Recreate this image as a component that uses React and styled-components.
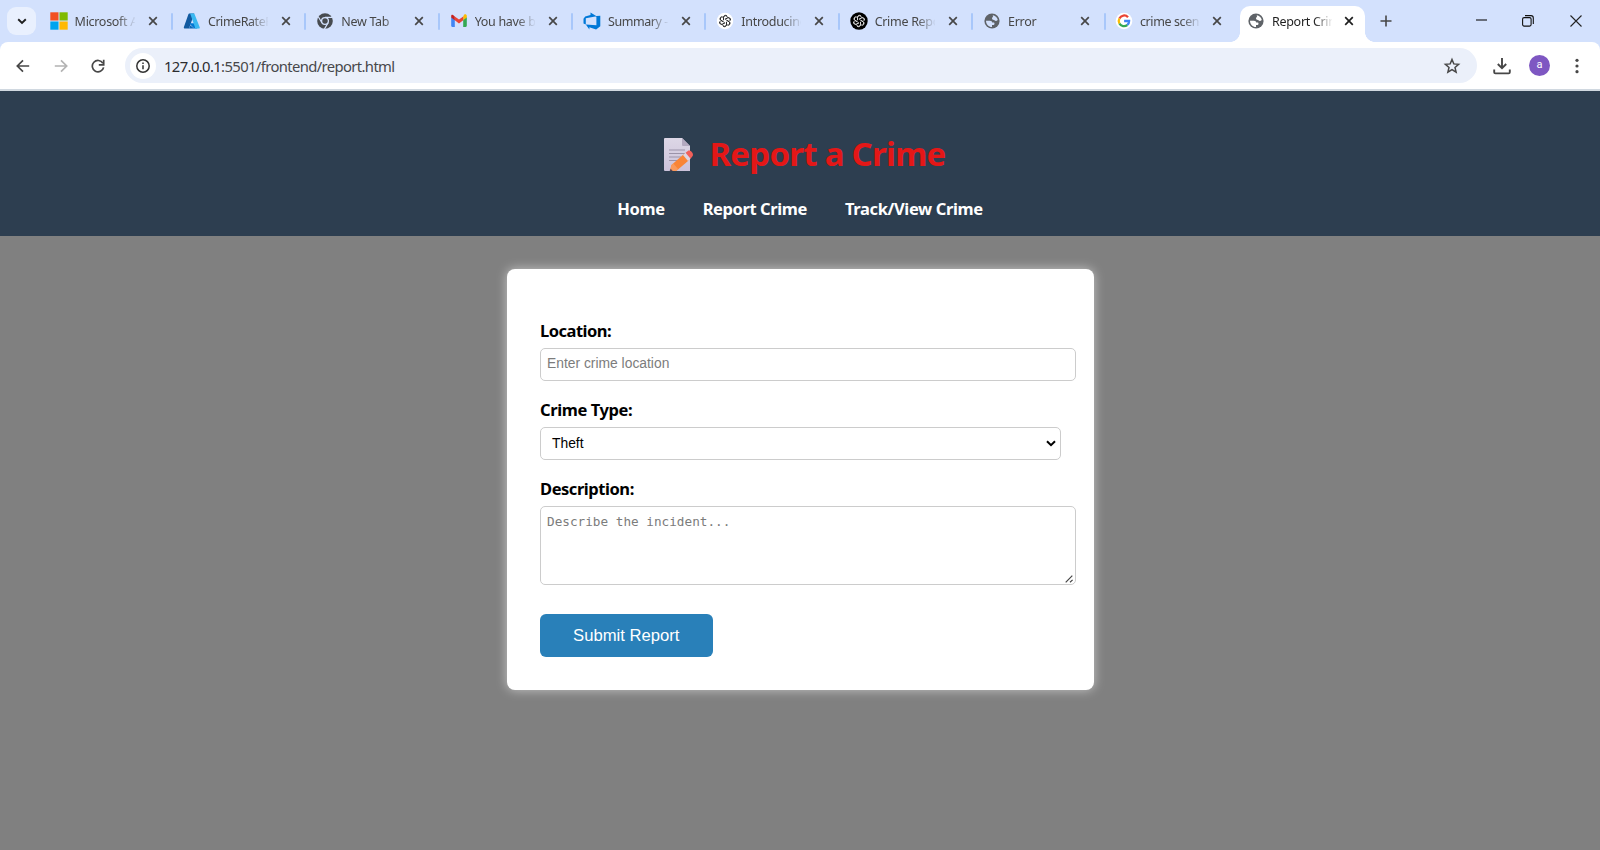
import React from "react";
import styled, { createGlobalStyle } from "styled-components";

const Global = createGlobalStyle`
  *, *::before, *::after { box-sizing: border-box; }
  body { margin: 0; background: #808080; font-family: "Noto Sans", "Open Sans", sans-serif; }
  svg { display: block; flex: none; }
`;

const Window = styled.div`
  width: 1600px;
  height: 850px;
  overflow: hidden;
  display: flex;
  flex-direction: column;
  background: #808080;
`;

/* Browser chrome */
const TabStrip = styled.div`
  height: 42px;
  flex: none;
  display: flex;
  align-items: flex-start;
  background: #d3e1fd;
  padding-left: 7px;
`;
const TabSearch = styled.div`
  width: 29px;
  height: 28px;
  margin: 7px 13.6px 0 0;
  border-radius: 9px;
  background: #e9f0fe;
  display: grid;
  place-items: center;
`;
const Tab = styled.div`
  position: relative;
  width: ${(p) => p.$w || 133.35}px;
  height: ${(p) => (p.$active ? 36 : 42)}px;
  margin-top: ${(p) => (p.$active ? 6 : 0)}px;
  padding: ${(p) => (p.$active ? "0 0 6px 7px" : "0")};
  display: flex;
  align-items: center;
  flex: none;
  background: ${(p) => (p.$active ? "#fff" : "transparent")};
  border-radius: 10px 10px 0 0;
  color: ${(p) => (p.$active ? "#1f1f1f" : "#474747")};
`;
const TabFoot = styled.span`
  position: absolute;
  bottom: 0;
  ${(p) => p.$side}: -10px;
  width: 10px;
  height: 10px;
  background: radial-gradient(circle at ${(p) => (p.$side === "left" ? "0 0" : "100% 0")}, transparent 9.6px, #fff 10.2px);
`;
const Label = styled.span`
  width: 60px;
  margin: 1px 0 0 7px;
  overflow: hidden;
  white-space: nowrap;
  font-size: 12.5px;
  line-height: 18px;
  letter-spacing: ${(p) => p.$ls}px;
  mask-image: linear-gradient(to right, #000 42px, transparent 61px);
`;
const CloseSlot = styled.span`
  margin-left: ${(p) => p.$gap || 13}px;
`;
const Separator = styled.span`
  width: 2px;
  height: 17px;
  margin-left: 13.5px;
  border-radius: 1px;
  background: #a8c7fa;
`;
const NewTab = styled.div`
  margin: 15px 0 0 15px;
`;
const WindowButtons = styled.div`
  display: flex;
  align-items: center;
  height: 41px;
  margin-left: 84px;
  gap: 35px;
`;

const Toolbar = styled.div`
  height: 49px;
  flex: none;
  display: flex;
  align-items: center;
  background: #fff;
  border-bottom: 2px solid #d0d8e0;
  border-radius: 8px 8px 0 0;
  padding-left: 16px;
`;
const ToolbarBack = styled.div`
  background: #d3e1fd;
  flex: none;
`;
const NavIcons = styled.div`
  display: flex;
  gap: 23.5px;
  width: 109px;
`;
const AddressBar = styled.div`
  width: 1352px;
  height: 35px;
  border-radius: 18px;
  background: #ebf0fa;
  display: flex;
  align-items: center;
  padding: 0 16px 0 5px;
`;
const SiteInfo = styled.div`
  width: 26px;
  height: 26px;
  border-radius: 50%;
  background: #fff;
  display: grid;
  place-items: center;
`;
const Url = styled.span`
  flex: 1;
  margin-left: 8px;
  font-size: 14.8px;
  letter-spacing: -0.62px;
  color: #47484b;
`;
const Host = styled.span`
  color: #2b2c2f;
`;
const DownloadSlot = styled.span`
  margin-left: 16px;
`;
const Avatar = styled.div`
  width: 21px;
  height: 21px;
  border-radius: 50%;
  margin: 0 23px 0 18px;
  background: #7e57c2;
  color: #fff;
  font: 11px/20px Roboto, sans-serif;
  text-align: center;
`;

/* Page */
const Header = styled.header`
  height: 145px;
  flex: none;
  background: #2d3e50;
  display: flex;
  flex-direction: column;
  align-items: center;
`;
const Title = styled.h1`
  margin: 40px 0 0 10px;
  height: 46px;
  display: flex;
  align-items: center;
  gap: 15px;
  font-size: 33px;
  line-height: 46px;
  letter-spacing: -0.74px;
  white-space: nowrap;
  color: #e41717;
`;
const MemoSlot = styled.span`
  padding-top: 1px;
`;
const Nav = styled.nav`
  display: flex;
  gap: 38px;
  margin-top: 20px;
`;
const NavLink = styled.a`
  font-size: 16.5px;
  line-height: 24px;
  font-weight: 700;
  letter-spacing: ${(p) => p.$ls}px;
  white-space: nowrap;
  color: #fff;
`;
const Card = styled.form`
  width: 587px;
  height: 421px;
  margin: 33px 0 0 507px;
  padding: 50px 18px 0 33px;
  border-radius: 8px;
  background: #fff;
  box-shadow: 0 0 11px rgba(255, 255, 255, 0.55);
`;
const Field = styled.div`
  height: ${(p) => p.$h}px;
`;
const FieldLabel = styled.label`
  display: block;
  height: 29px;
  font-size: 16.5px;
  line-height: ${(p) => p.$lh || 23}px;
  font-weight: 700;
  letter-spacing: ${(p) => p.$ls}px;
  color: #000;
`;
const TextInput = styled.input`
  display: block;
  width: 536px;
  height: 33px;
  padding: 0 6px 3px;
  border: 1px solid #ccc;
  border-radius: 5px;
  font: 13.85px "Liberation Sans", sans-serif;
  outline: none;
  &::placeholder { color: #7c7c7c; opacity: 1; }
`;
const SelectBox = styled.div`
  width: 521px;
  height: 33px;
  padding: 0 4px 1px 11px;
  border: 1px solid #ccc;
  border-radius: 5px;
  display: flex;
  align-items: center;
  justify-content: space-between;
  font: 13.85px "Liberation Sans", sans-serif;
  color: #000;
`;
const AreaWrap = styled.div`
  position: relative;
  width: 536px;
  height: 79px;
`;
const Area = styled.textarea`
  display: block;
  width: 100%;
  height: 100%;
  padding: 7px 6px;
  border: 1px solid #ccc;
  border-radius: 5px;
  resize: none;
  outline: none;
  font: 12.7px/16px "DejaVu Sans Mono", monospace;
  &::placeholder { color: #7c7c7c; opacity: 1; }
`;
const Grip = styled.svg`
  position: absolute;
  right: 2px;
  bottom: 2px;
`;
const Submit = styled.button`
  display: block;
  width: 172.5px;
  height: 42.5px;
  padding: 1px 0 0;
  border: 0;
  border-radius: 6px;
  background: #2980b9;
  color: #fff;
  font: 16.65px "Liberation Sans", sans-serif;
`;

/* Icons */
const Close = ({ dark }) => (
  <svg width="10" height="10" viewBox="0 0 10 10">
    <path d="M1.2 1.2l7.6 7.6M8.8 1.2L1.2 8.8" stroke={dark ? "#1f1f1f" : "#474747"} strokeWidth="1.7" />
  </svg>
);
const Microsoft = () => (
  <svg width="18" height="18" viewBox="0 0 18 18">
    <path d="M.3.3h8.2v8.2H.3z" fill="#f25022" />
    <path d="M9.5.3h8.2v8.2H9.5z" fill="#7fba00" />
    <path d="M.3 9.5h8.2v8.2H.3z" fill="#00a4ef" />
    <path d="M9.5 9.5h8.2v8.2H9.5z" fill="#ffb900" />
  </svg>
);
const Azure = () => (
  <svg width="18" height="18" viewBox="0 0 18 18">
    <path d="M6.3 1.5h5L6 16.600H2c-1 0-1.400-.7-1.100-1.500L5.400 2.200c.1-.4.5-.7.9-.7z" fill="#125aa0" />
    <path d="M6.2 11.2h7.1l1 5.3H11z" fill="#0078d4" />
    <path d="M11.6 2.200c-.1-.4-.5-.7-1-.7H6.400c.5 0 .8.3 1 .7l4.600 13.100c.2.7-.2 1.300-.9 1.300h4.700c.7 0 1.200-.7.9-1.300z" fill="#3ab8f1" />
    <path d="M6 16.600l1.200-3.300 4 3.200z" fill="#0b67b7" />
  </svg>
);
const ChromeMark = () => (
  <svg width="18" height="18" viewBox="0 0 18 18">
    <circle cx="9" cy="9" r="7.8" fill="#474b50" />
    <circle cx="9" cy="9" r="3.4" fill="#474b50" stroke="#d3e1fd" strokeWidth="1.3" />
    <path d="M9 5.4h7.4M5.9 10.8L2.3 4.7M12.1 10.8l-3.7 6.3" stroke="#d3e1fd" strokeWidth="1.2" />
  </svg>
);
const Gmail = () => (
  <svg width="18" height="18" viewBox="0 0 18 18">
    <path d="M1.2 5v8.800c0 .6.5 1.100 1.100 1.100h2.500V7.400z" fill="#4285f4" />
    <path d="M13.2 14.900h2.500c.6 0 1.100-.5 1.100-1.100V5l-3.600 2.600z" fill="#34a853" />
    <path d="M13.2 4.400v3.800l3.600-2.700V4c0-1.500-1.600-2.200-2.700-1.300z" fill="#fbbc04" />
    <path d="M4.8 8.200V4.400L9 7.600l4.200-3.200v3.800L9 11.400z" fill="#ea4335" />
    <path d="M1.2 4v1.500l3.600 2.700V4.400l-.9-.7C2.800 2.500 1.200 2.600 1.200 4z" fill="#c5221f" />
  </svg>
);
const DevOps = () => (
  <svg width="18" height="18" viewBox="0 0 18 18">
    <path d="M17.3 3.700v10.500l-4.200 3.300-6.700-2.300v2.300L2.800 12.500l10.600.8V4.100zM13.600 4.200L7.500.5v2.500L2.200 4.600.5 6.700v4.800l2.300 1V6.200z" fill="#0078d7" />
  </svg>
);
const OpenAI = ({ invert }) => (
  <svg width="18" height="18" viewBox="0 0 18 18">
    <circle cx="9" cy="9" r={invert ? 8.7 : 8.2} fill={invert ? "#000" : "#fff"} />
    <g transform="translate(1.1 1.1) scale(.88)" fill="none" stroke={invert ? "#e4e4e4" : "#222"} strokeWidth="0.9">
      {[0, 60, 120, 180, 240, 300].map((a) => (
        <path key={a} transform={"rotate(" + a + " 9 9)"} d="M9 7.1l3-1.75a2.3 2.3 0 0 1 2.1 3.9M7.3 8V4.7a2.3 2.3 0 0 1 4-1.5" />
      ))}
    </g>
  </svg>
);
const Globe = ({ bg }) => (
  <svg width="18" height="18" viewBox="0 0 18 18">
    <circle cx="9" cy="9" r="7.6" fill="#5f6368" />
    <path d="M9.8 3.200c2.400.3 4.300 2 4.900 4.300-.2 1.100-1 1.500-1.900 1.400-.9-.1-1-.9-1.900-1-1.200-.1-1.900-.6-1.900-1.500 0-1 1-1.100 1-1.900 0-.5-.3-.8-.2-1.300z" fill={bg} />
    <path d="M3 8.700h3.900c1.600 0 2.300.8 2.300 1.900h1.200c.8 0 1.100.5 1.100 1.200 0 .8-.6 1.200-1.400 1.200H9v2C5.700 15 3 12.300 3 8.700z" fill={bg} />
  </svg>
);
const Google = () => (
  <svg width="18" height="18" viewBox="0 0 18 18">
    <circle cx="9" cy="9" r="8.3" fill="#fff" />
    <g fill="none" strokeWidth="2.3">
      <path d="M13 5.200A5.200 5.200 0 0 0 4.400 6.500" stroke="#ea4335" />
      <path d="M4.400 6.500a5.200 5.200 0 0 0 0 5" stroke="#fbbc04" />
      <path d="M4.400 11.500a5.200 5.200 0 0 0 7.900 1.500" stroke="#34a853" />
      <path d="M12.300 13A5.200 5.200 0 0 0 14.100 9H9.100" stroke="#4285f4" />
    </g>
  </svg>
);
const Memo = () => (
  <svg width="30" height="36" viewBox="0 0 30 36">
    <defs>
      <linearGradient id="paper" x1="0" y1="0" x2="0" y2="1">
        <stop offset="0" stopColor="#ddd7e6" />
        <stop offset="1" stopColor="#cbc2da" />
      </linearGradient>
    </defs>
    <path d="M1 1h17l8 8v25H1a1 1 0 0 1-1-1V2a1 1 0 0 1 1-1z" fill="url(#paper)" />
    <path d="M18 1l8 8h-7a1 1 0 0 1-1-1z" fill="#b3a9c0" />
    <path d="M5 13h16M5 16.500h16M5 20h12M5 23.500h8" stroke="#9b93a9" strokeWidth="1.2" />
    <path d="M7.500 28L20.500 16.500l5 6.200L12.500 33.800 6 34z" fill="#f98536" />
    <path d="M7.500 28l1.800-1.600 5 5.900-1.800 1.500L6 34z" fill="#f99a5c" />
    <path d="M6.700 31.700l2 2.200L5.500 34.200z" fill="#5b4450" />
    <path d="M19 18l2.600-2.300 5 6-2.600 2.300z" fill="#ddd5e2" />
    <path d="M21.600 15.700l2.500-2c2.300-1.500 6 3 4.500 5.200l-2 2.800z" fill="#f2605a" />
  </svg>
);

const tabs = [
  { icon: <Microsoft />, text: "Microsoft A" },
  { icon: <Azure />, text: "CrimeRateP", ls: -0.45 },
  { icon: <ChromeMark />, text: "New Tab" },
  { icon: <Gmail />, text: "You have b" },
  { icon: <DevOps />, text: "Summary -", ls: -0.45 },
  { icon: <OpenAI />, text: "Introducing" },
  { icon: <OpenAI invert />, text: "Crime Repo" },
  { icon: <Globe bg="#d3e1fd" />, text: "Error", w: 132, gap: 12 },
  { icon: <Google />, text: "crime scene", ls: -0.4, w: 125, gap: 12, last: true },
];

export default function App() {
  return (
    <Window>
      <Global />
      <TabStrip>
        <TabSearch>
          <svg width="10" height="7" viewBox="0 0 10 7">
            <path d="M1.2 1.3L5 5l3.800-3.700" fill="none" stroke="#1f1f1f" strokeWidth="1.9" />
          </svg>
        </TabSearch>
        {tabs.map((t) => (
          <Tab key={t.text} $w={t.w}>
            {t.icon}
            <Label $ls={t.ls || -0.3}>{t.text}</Label>
            <CloseSlot $gap={t.gap}><Close /></CloseSlot>
            {!t.last && <Separator />}
          </Tab>
        ))}
        <Tab $active $w={125}>
          <TabFoot $side="left" />
          <Globe bg="#fff" />
          <Label $ls={-0.3}>Report Crime</Label>
          <CloseSlot $gap={12}><Close dark /></CloseSlot>
          <TabFoot $side="right" />
        </Tab>
        <NewTab>
          <svg width="12" height="12" viewBox="0 0 12 12">
            <path d="M6 .5v11M.5 6h11" stroke="#474747" strokeWidth="1.6" />
          </svg>
        </NewTab>
        <WindowButtons>
          <svg width="11" height="12" viewBox="0 0 11 12"><path d="M0 5h11" stroke="#111" strokeWidth="1.1" /></svg>
          <svg width="12" height="12" viewBox="0 0 12 12">
            <rect x=".6" y="2.6" width="8.5" height="8.5" rx="1.5" fill="none" stroke="#111" strokeWidth="1.1" />
            <path d="M3 .6h6a2.300 2.300 0 0 1 2.300 2.300V9" fill="none" stroke="#111" strokeWidth="1.1" />
          </svg>
          <svg width="14" height="12" viewBox="-1 0 14 12"><path d="M.5.5l11 11M11.500.5l-11 11" stroke="#222" strokeWidth="1.1" /></svg>
        </WindowButtons>
      </TabStrip>
      <ToolbarBack>
        <Toolbar>
          <NavIcons>
            <svg width="14" height="14" viewBox="0 0 14 14">
              <path d="M13.2 7H1.500M7 1.300L1.300 7 7 12.700" fill="none" stroke="#474747" strokeWidth="1.7" />
            </svg>
            <svg width="14" height="14" viewBox="0 0 14 14">
              <path d="M.8 7h11.700M7 1.300L12.700 7 7 12.700" fill="none" stroke="#b3b3b3" strokeWidth="1.7" />
            </svg>
            <svg width="14" height="14" viewBox="0 0 14 14">
              <path d="M11.900 4.200A5.700 5.700 0 1 0 12.600 8.300" fill="none" stroke="#474747" strokeWidth="1.7" />
              <path d="M12.700.8v5H7.800" fill="none" stroke="#474747" strokeWidth="1.7" />
            </svg>
          </NavIcons>
          <AddressBar>
            <SiteInfo>
              <svg width="14" height="14" viewBox="0 0 14 14">
                <circle cx="7" cy="7" r="6.2" fill="none" stroke="#333" strokeWidth="1.5" />
                <path d="M7 6.200v4M7 3.500v1.500" stroke="#333" strokeWidth="1.5" />
              </svg>
            </SiteInfo>
            <Url><Host>127.0.0.1</Host>:5501/frontend/report.html</Url>
            <svg width="18" height="18" viewBox="0 0 18 18">
              <path d="M9 2.500l1.800 4.400 4.800.4-3.600 3.100 1.100 4.700L9 12.600l-4.100 2.500L6 10.400 2.400 7.300l4.800-.4z" fill="none" stroke="#474747" strokeWidth="1.5" />
            </svg>
          </AddressBar>
          <DownloadSlot>
            <svg width="18" height="18" viewBox="0 0 18 18">
              <path d="M9 1v10M4.800 7L9 11.200 13.200 7M1.200 12.500v2.700c0 .7.500 1.200 1.200 1.200h13.200c.7 0 1.200-.5 1.200-1.200v-2.700" fill="none" stroke="#474747" strokeWidth="1.9" />
            </svg>
          </DownloadSlot>
          <Avatar>a</Avatar>
          <svg width="8" height="16" viewBox="0 0 8 16" fill="#474747">
            <circle cx="4" cy="2.3" r="1.6" /><circle cx="4" cy="8" r="1.6" /><circle cx="4" cy="13.7" r="1.6" />
          </svg>
        </Toolbar>
      </ToolbarBack>
      <Header>
        <Title><MemoSlot><Memo /></MemoSlot>Report a Crime</Title>
        <Nav>
          <NavLink $ls={-0.35}>Home</NavLink>
          <NavLink $ls={-0.4}>Report Crime</NavLink>
          <NavLink $ls={-0.36}>Track/View Crime</NavLink>
        </Nav>
      </Header>
      <Card>
        <Field $h={79}>
          <FieldLabel $ls={-0.5} $lh={24}>Location:</FieldLabel>
          <TextInput placeholder="Enter crime location" />
        </Field>
        <Field $h={79}>
          <FieldLabel $ls={-0.4}>Crime Type:</FieldLabel>
          <SelectBox>
            Theft
            <svg width="10" height="7" viewBox="0 0 10 7">
              <path d="M1 1.200L5 5.200l4-4" fill="none" stroke="#000" strokeWidth="2" />
            </svg>
          </SelectBox>
        </Field>
        <Field $h={137}>
          <FieldLabel $ls={-0.45}>Description:</FieldLabel>
          <AreaWrap>
            <Area placeholder="Describe the incident..." />
            <Grip width="9" height="8" viewBox="0 0 9 8">
              <path d="M.7 7.300L7.300.7M5 7.300L7.600 4.900" stroke="#444" strokeWidth="1.2" />
            </Grip>
          </AreaWrap>
        </Field>
        <Submit type="button">Submit Report</Submit>
      </Card>
    </Window>
  );
}
